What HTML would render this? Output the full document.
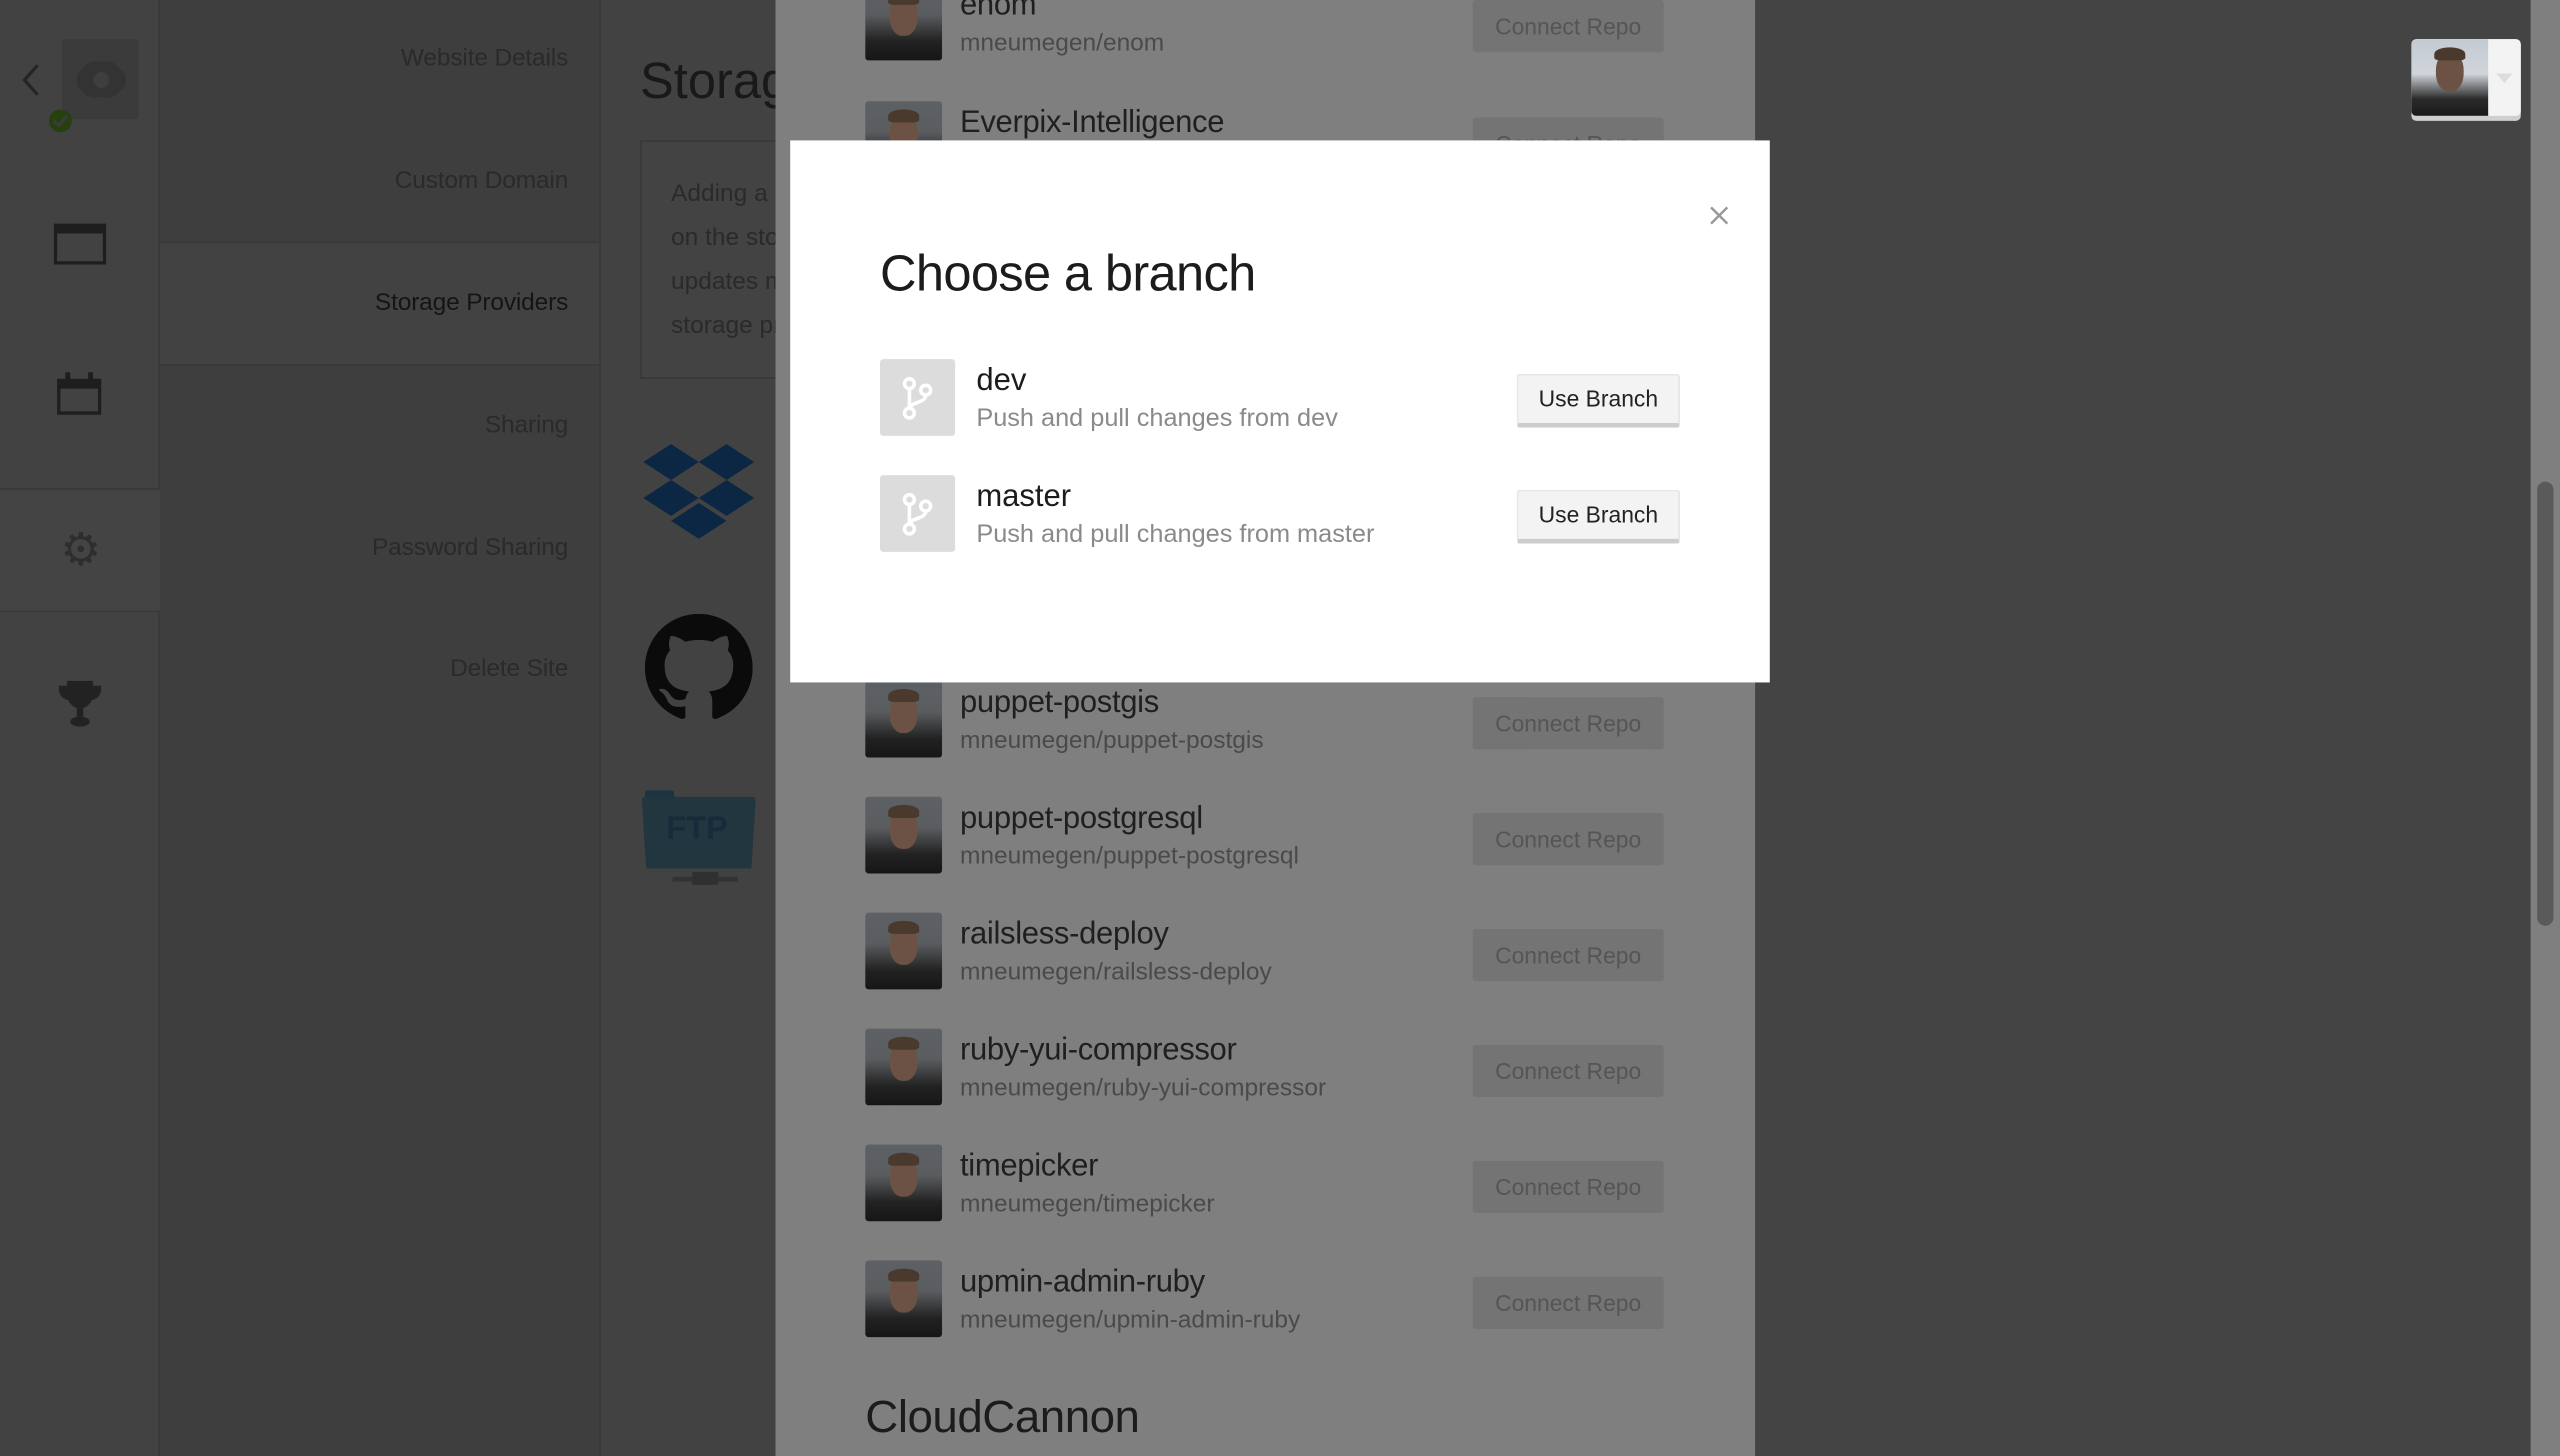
<!DOCTYPE html>
<html><head><meta charset="utf-8"><style>
*{margin:0;padding:0;box-sizing:border-box}
html,body{width:2560px;height:1456px;overflow:hidden;background:#444}
#w{position:absolute;left:0;top:0;width:1568px;height:892px;transform:scale(1.63265);transform-origin:0 0;font-family:"Liberation Sans",sans-serif;background:#444}
.abs{position:absolute}
.side{left:0;top:0;width:98px;height:892px;background:#424242;border-right:1px solid #393939}
.nav{left:98px;top:0;width:270px;height:892px;background:#3e3e3e;border-right:1px solid #393939}
.nav div{position:absolute;right:19px;font-size:15px;color:#2a2a2a;text-align:right;letter-spacing:-.1px}
.content{left:368px;top:0;width:107px;height:892px;background:#424242;overflow:hidden}
.panel{left:475px;top:0;width:600px;height:892px;background:#7f7f7f}
.row{position:absolute;left:55px;width:490px;height:48px}
.av{position:absolute;left:0;top:0;width:47px;height:47px;border-radius:2px;background:linear-gradient(180deg,#5d6165 0%,#5a5d60 40%,#222 75%,#161616 100%);overflow:hidden}
.av:before{content:"";position:absolute;left:15px;top:8px;width:17px;height:24px;border-radius:45%;background:#6c5244}
.av:after{content:"";position:absolute;left:14px;top:5px;width:19px;height:8px;border-radius:50% 50% 20% 20%;background:#4a3a2e}
.row .t{position:absolute;left:58px;top:3px;font-size:19px;color:#1f1f1f;white-space:nowrap;letter-spacing:-.2px}
.row .s{position:absolute;left:58px;top:28px;font-size:15px;color:#4a4a4a;white-space:nowrap}
.row .b{position:absolute;left:372px;top:0;width:117px;height:32px;background:#747474;border-radius:2px;color:#555;font-size:14px;line-height:32px;text-align:center}
.modal{left:484px;top:86px;width:600px;height:332px;background:#fff}
.br{position:absolute;left:55px;width:490px;height:48px}
.br .ic{position:absolute;left:0;top:0;width:46px;height:47px;background:#dcdcdc;border-radius:2px}
.br .n{position:absolute;left:59px;top:3px;font-size:19px;color:#1c1c1c}
.br .d{position:absolute;left:59px;top:28px;font-size:15.5px;color:#8a8a8a}
.br .u{position:absolute;left:390px;top:9px;width:100px;height:33px;background:#f3f3f3;border:1px solid #e6e6e6;border-bottom:3px solid #cdcdcd;border-radius:2px;font-size:14px;color:#222;line-height:29px;text-align:center}
</style></head><body><div id="w">
<div class="abs side">
  <svg class="abs" style="left:12px;top:38px" width="14" height="22" viewBox="0 0 14 22"><path d="M11 2 L3 11 L11 20" stroke="#252525" stroke-width="2" fill="none"/></svg>
  <div class="abs" style="left:38px;top:24px;width:47px;height:49px;background:#3b3b3b;border-radius:2px"></div>
  <svg class="abs" style="left:44px;top:34px" width="36" height="30" viewBox="0 0 36 30"><path d="M18 4 C24 2 28 6 30 9 C34 10 34 20 30 21 C28 25 23 27 18 25 C13 27 8 25 6 21 C2 20 2 10 6 9 C8 6 12 2 18 4Z" fill="#333"/><circle cx="18" cy="15" r="5" fill="#3e3e3e"/></svg>
  <div class="abs" style="left:30px;top:67px;width:14px;height:14px;border-radius:50%;background:#27400f"></div>
  <svg class="abs" style="left:32px;top:70px" width="10" height="8"><path d="M1 4 L4 7 L9 1" stroke="#3b3b3b" stroke-width="2" fill="none"/></svg>
  <div class="abs" style="left:33px;top:137px;width:32px;height:25px;border:2px solid #1e1e1e;border-top-width:6px"></div>
  <div class="abs" style="left:35px;top:232px;width:27px;height:22px;border:2px solid #1e1e1e;border-top-width:6px"></div>
  <div class="abs" style="left:40px;top:228px;width:3px;height:8px;background:#1e1e1e"></div>
  <div class="abs" style="left:54px;top:228px;width:3px;height:8px;background:#1e1e1e"></div>
  <div class="abs" style="left:0;top:299px;width:98px;height:76px;background:#444;border-top:1px solid #393939;border-bottom:1px solid #393939"></div>
  <div class="abs" style="left:37px;top:325px;font-size:28px;color:#2e2e2e;line-height:24px">⚙</div>
  <svg class="abs" style="left:35px;top:416px" width="28" height="30" viewBox="0 0 28 30"><path d="M7 2 H21 V9 C21 14 17 17 14 17 C11 17 7 14 7 9Z M7 5 H2 C2 10 5 12 8 12 M21 5 H26 C26 10 23 12 20 12" stroke="#222" stroke-width="2" fill="#222"/><rect x="12" y="17" width="4" height="7" fill="#222"/><ellipse cx="14" cy="26" rx="6" ry="3" fill="#222"/></svg>
</div>
<div class="abs nav">
  <div class="abs" style="left:0;top:148px;width:269px;height:76px;background:#424242;border-top:1px solid #393939;border-bottom:1px solid #393939;right:auto"></div>
  <div style="top:27px">Website Details</div>
  <div style="top:102px">Custom Domain</div>
  <div style="top:177px;color:#151515">Storage Providers</div>
  <div style="top:252px">Sharing</div>
  <div style="top:327px">Password Sharing</div>
  <div style="top:401px">Delete Site</div>
</div>
<div class="abs content">
  <div class="abs" style="left:24px;top:32px;font-size:31px;color:#191919;white-space:nowrap">Storage</div>
  <div class="abs" style="left:24px;top:86px;width:200px;height:146px;border:1px solid #383838;background:#434343"></div>
  <div class="abs" style="left:43px;top:105px;font-size:15px;color:#2a2a2a;line-height:27px;white-space:nowrap">Adding a storage<br>on the storage<br>updates made<br>storage provider</div>
  <svg class="abs" style="left:25px;top:272px" width="70" height="62" viewBox="0 0 70 62"><g fill="#0c2744"><path d="M18 0 L35 11 L18 22 L1 11Z"/><path d="M52 0 L69 11 L52 22 L35 11Z"/><path d="M18 22 L35 33 L18 44 L1 33Z"/><path d="M52 22 L69 33 L52 44 L35 33Z"/><path d="M35 36 L52 47 L35 58 L18 47Z"/></g></svg>
  <svg class="abs" style="left:27px;top:376px" width="66" height="66" viewBox="0 0 16 16"><path fill="#0b0b0b" d="M8 0C3.580 0 0 3.58 0 8c0 3.54 2.29 6.53 5.470 7.59.4.07.55-.17.55-.38 0-.19-.01-.82-.01-1.49-2.01.37-2.530-.49-2.690-.94-.09-.23-.48-.94-.82-1.13-.28-.15-.68-.52-.01-.53.63-.01 1.08.58 1.23.82.72 1.21 1.87.87 2.33.66.07-.52.28-.87.51-1.07-1.78-.2-3.64-.89-3.64-3.95 0-.87.31-1.59.82-2.15-.08-.2-.36-1.020.08-2.12 0 0 .67-.21 2.2.82.64-.18 1.32-.27 2-.27.68 0 1.36.09 2 .27 1.53-1.04 2.2-.82 2.2-.82.44 1.1.16 1.92.08 2.12.51.56.82 1.27.82 2.15 0 3.07-1.87 3.75-3.65 3.95.29.25.54.73.54 1.48 0 1.07-.01 1.93-.01 2.2 0 .21.15.46.55.38A8.013 8.013 0 0016 8c0-4.42-3.58-8-8-8z"/></svg>
  <div class="abs" style="left:27px;top:484px;width:18px;height:6px;background:#1c3440;border-radius:2px 2px 0 0"></div>
  <div class="abs" style="left:25px;top:488px;width:70px;height:44px;background:#22363f;border-radius:2px 2px 4px 4px;clip-path:polygon(0 0,100% 0,96% 100%,4% 100%)"></div>
  <div class="abs" style="left:40px;top:497px;font-size:20px;font-weight:bold;color:#172b3b">FTP</div>
  <div class="abs" style="left:44px;top:537px;width:40px;height:3px;background:#333"></div>
  <div class="abs" style="left:56px;top:534px;width:16px;height:8px;background:#303030"></div>
</div>
<div class="abs panel">
  <div class="row" style="top:-10px"><div class="av"></div><div class="t">enom</div><div class="s">mneumegen/enom</div><div class="b" style="top:10px">Connect Repo</div></div>
  <div class="row" style="top:62px"><div class="av"></div><div class="t">Everpix-Intelligence</div><div class="b" style="top:10px">Connect Repo</div></div>
  <div class="row" style="top:417px"><div class="av"></div><div class="t">puppet-postgis</div><div class="s">mneumegen/puppet-postgis</div><div class="b" style="top:10px">Connect Repo</div></div>
  <div class="row" style="top:488px"><div class="av"></div><div class="t">puppet-postgresql</div><div class="s">mneumegen/puppet-postgresql</div><div class="b" style="top:10px">Connect Repo</div></div>
  <div class="row" style="top:559px"><div class="av"></div><div class="t">railsless-deploy</div><div class="s">mneumegen/railsless-deploy</div><div class="b" style="top:10px">Connect Repo</div></div>
  <div class="row" style="top:630px"><div class="av"></div><div class="t">ruby-yui-compressor</div><div class="s">mneumegen/ruby-yui-compressor</div><div class="b" style="top:10px">Connect Repo</div></div>
  <div class="row" style="top:701px"><div class="av"></div><div class="t">timepicker</div><div class="s">mneumegen/timepicker</div><div class="b" style="top:10px">Connect Repo</div></div>
  <div class="row" style="top:772px"><div class="av"></div><div class="t">upmin-admin-ruby</div><div class="s">mneumegen/upmin-admin-ruby</div><div class="b" style="top:10px">Connect Repo</div></div>
  <div class="abs" style="left:55px;top:852px;font-size:28px;color:#1c1c1c;letter-spacing:-.3px">CloudCannon</div>
</div>
<div class="abs modal">
  <svg class="abs" style="left:563px;top:40px" width="12" height="12"><path d="M1 1 L11 11 M11 1 L1 11" stroke="#999" stroke-width="1.5"/></svg>
  <div class="abs" style="left:55px;top:64px;font-size:31px;color:#1c1c1c;letter-spacing:-.4px">Choose a branch</div>
  <div class="br" style="top:134px"><div class="ic"><svg style="position:absolute;left:13px;top:10px" width="20" height="28" viewBox="0 0 20 28"><g stroke="#fff" stroke-width="2.2" fill="none"><circle cx="5" cy="5" r="3"/><circle cx="5" cy="23" r="3"/><circle cx="15" cy="9" r="3"/><path d="M5 8 V20 M15 12 C15 17 6 16 5 20"/></g></svg></div><div class="n">dev</div><div class="d">Push and pull changes from dev</div><div class="u">Use Branch</div></div>
  <div class="br" style="top:205px"><div class="ic"><svg style="position:absolute;left:13px;top:10px" width="20" height="28" viewBox="0 0 20 28"><g stroke="#fff" stroke-width="2.2" fill="none"><circle cx="5" cy="5" r="3"/><circle cx="5" cy="23" r="3"/><circle cx="15" cy="9" r="3"/><path d="M5 8 V20 M15 12 C15 17 6 16 5 20"/></g></svg></div><div class="n">master</div><div class="d">Push and pull changes from master</div><div class="u">Use Branch</div></div>
</div>
<div class="abs" style="left:1477px;top:24px;width:67px;height:50px;background:#cfcfcf;border-radius:3px"></div>
<div class="abs" style="left:1477px;top:24px;width:67px;height:47px;background:#f3f3f3;border-radius:3px;overflow:hidden"><div class="av" style="width:47px;height:47px;border-radius:0;background:linear-gradient(180deg,#c3cad2 0%,#d0d5da 45%,#2a2a2a 78%,#1a1a1a 100%)"></div></div>
<div class="abs" style="left:1529px;top:45px;width:0;height:0;border-left:5px solid transparent;border-right:5px solid transparent;border-top:6px solid #ddd"></div>
<div class="abs" style="left:1550px;top:0;width:18px;height:892px;background:#7f7f7f"></div>
<div class="abs" style="left:1554px;top:295px;width:10px;height:272px;background:#5a5a5a;border-radius:5px"></div>
</div></body></html>
